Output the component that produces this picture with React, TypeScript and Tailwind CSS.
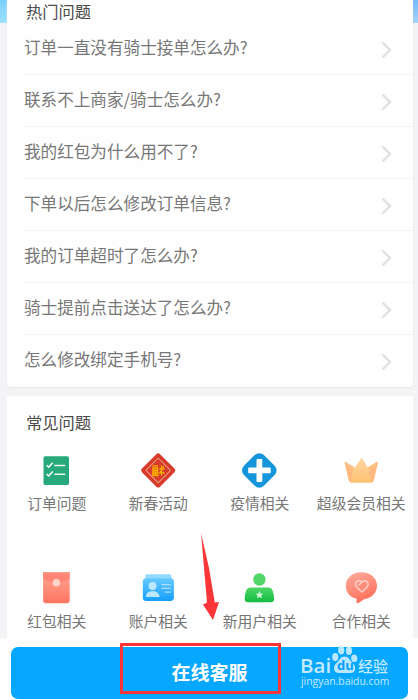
import type { ReactNode } from "react";

const questions = [
  "订单一直没有骑士接单怎么办?",
  "联系不上商家/骑士怎么办?",
  "我的红包为什么用不了?",
  "下单以后怎么修改订单信息?",
  "我的订单超时了怎么办?",
  "骑士提前点击送达了怎么办?",
  "怎么修改绑定手机号?",
];

function Chevron() {
  return (
    <svg className="mt-[3px] mr-[21px] h-[18px] w-3 shrink-0" viewBox="0 0 12 18" fill="none">
      <path d="M2.5 1.5 10 9l-7.5 7.5" stroke="#dfdfdf" strokeWidth="2.2" />
    </svg>
  );
}

const iconClass = "h-10 w-10 -ml-px";

function OrderIcon() {
  return (
    <svg className={iconClass} viewBox="0 0 40 40" fill="none">
      <rect x="7.5" y="6.3" width="25.5" height="28.6" rx="1.6" fill="#27a97b" />
      <path d="m10.7 15.2 2 2 4-4.5M10.7 24l2 2 4-4.5" stroke="#fff" strokeWidth="1.5" />
      <path d="M18.8 15.5h10M18.8 24.3h10" stroke="#e9f8f1" strokeWidth="1.4" strokeLinecap="round" />
    </svg>
  );
}

function FestivalIcon() {
  return (
    <svg className={iconClass} viewBox="0 0 40 40" fill="none">
      <rect x="7.4" y="7.6" width="25.6" height="25.6" rx="2.6" fill="#d83a2c" transform="rotate(45 20.2 20.4)" />
      <rect x="11.5" y="11.7" width="17.4" height="17.4" rx=".6" stroke="#eba082" strokeWidth="1" transform="rotate(45 20.2 20.4)" />
      <path d="M14.3 15.8h5.8M15 18h4.6v2.2H15zM14.8 22h5v3.6h-5zM17.3 22v3.5M14.8 23.8h5M21.4 19h5.2M23.5 15.5v10M25.8 15.8l-1 2M23.4 21l-2 2.5M24 22l2.4 1.4" stroke="#f7b000" strokeWidth="1.35" />
    </svg>
  );
}

function MedicalIcon() {
  return (
    <svg className={iconClass} viewBox="0 0 40 40">
      <rect x="6.2" y="6.3" width="28.2" height="28.2" rx="6.5" fill="#1596db" transform="rotate(45 20.3 20.4)" />
      <path d="M18.5 9h3.8q1 0 1 1v7.5h7.4q1 0 1 1v3.8q0 1-1 1h-7.4v7.6q0 1-1 1h-3.8q-1 0-1-1v-7.6h-7.3q-1 0-1-1v-3.8q0-1 1-1h7.3V10q0-1 1-1Z" fill="#fff" />
    </svg>
  );
}

function CrownIcon() {
  return (
    <svg className={iconClass} viewBox="0 0 40 40">
      <defs>
        <linearGradient id="crown" x1="0" y1="0" x2="0" y2="1">
          <stop stopColor="#ffd7a0" />
          <stop offset="1" stopColor="#ffc173" />
        </linearGradient>
      </defs>
      <path d="M3.8 13.2q-.5-2 1.3-1.1l8.5 5.1L11 32.8q-2.5 0-3.2-2.6Z" fill="#ffc18a" />
      <path d="M36.8 13.2q.5-2-1.3-1.1l-8.5 5.1 2.6 15.6q2.5 0 3.2-2.6Z" fill="#ffbd76" />
      <path d="m4 12.4 8.2 7.8L20 8.4q.7-.9 1.4 0L28.2 20l8.2-7.8-5 19q-.5 1.6-2.4 1.6H11.7q-2 0-2.6-1.6Z" fill="url(#crown)" />
      <path d="m4 12.4 7.9 8-2.3 11.8q-1.3-.5-1.8-2Z" fill="#ffb87d" />
      <path d="m36.5 12.4-9 9 3.7 10.2q1.2-.7 1.6-1.9Z" fill="#ffb87d" />
    </svg>
  );
}

function PacketIcon() {
  return (
    <svg className={iconClass} viewBox="0 0 40 40">
      <defs>
        <linearGradient id="packet" x1="0" y1="0" x2="0" y2="1">
          <stop stopColor="#ffa796" />
          <stop offset="1" stopColor="#ff7560" />
        </linearGradient>
      </defs>
      <path d="M7.1 4h26.6v28.3q0 3-3 3H10.1q-3 0-3-3Z" fill="url(#packet)" />
      <path d="M7.1 4h26.6v6.5q-13.3 9-26.6 0Z" fill="#ff8674" />
      <path d="M7.1 4h26.6v1.4H7.1Z" fill="#ff9d8c" />
      <circle cx="20.4" cy="14.8" r="3.8" fill="#ffd4ca" />
    </svg>
  );
}

function AccountIcon() {
  return (
    <svg className={iconClass} viewBox="0 0 40 40">
      <defs>
        <linearGradient id="account" x1="0" y1="0" x2="0" y2="1">
          <stop stopColor="#65c9ff" />
          <stop offset="1" stopColor="#159ffb" />
        </linearGradient>
      </defs>
      <rect x="7.4" y="6.2" width="26" height="10" rx="1.6" fill="#91d9ff" />
      <rect x="4.8" y="10.3" width="31.1" height="22.7" rx="3.4" fill="url(#account)" />
      <circle cx="14.5" cy="18.1" r="4" fill="#bbe7ff" />
      <path d="M7.8 29q.4-6.1 6.8-6.1T21.8 29Z" fill="#bbe7ff" />
      <path d="M23.4 16.6h9.5M23.4 20.4h9.5M26.8 24.1h6.1" stroke="#a7dfff" strokeWidth="1.3" />
    </svg>
  );
}

function NewUserIcon() {
  return (
    <svg className={iconClass} viewBox="0 0 40 40">
      <defs>
        <linearGradient id="user" x1="0" y1="0" x2="0" y2="1">
          <stop stopColor="#4ed765" />
          <stop offset="1" stopColor="#13bb43" />
        </linearGradient>
      </defs>
      <circle cx="20.4" cy="11.5" r="6.2" fill="#54d568" />
      <path d="M11.8 19.6h17.6q3 0 4.2 3 1.5 3.7 1.5 8.7-.2 3-3.4 3H9.1q-3.2 0-3.4-3 0-5 1.5-8.7 1.3-3 4.6-3Z" fill="url(#user)" />
      <path d="m20.4 23 1.1 2.5 2.7.3-2 1.8.6 2.7-2.4-1.4-2.4 1.4.6-2.7-2-1.8 2.7-.3Z" fill="#ccf5d2" />
    </svg>
  );
}

function PartnerIcon() {
  return (
    <svg className={iconClass} viewBox="0 0 40 40" fill="none">
      <defs>
        <linearGradient id="partner" x1="0" y1="0" x2=".4" y2="1">
          <stop stopColor="#ffad9e" />
          <stop offset="1" stopColor="#ff725c" />
        </linearGradient>
      </defs>
      <path d="M20.3 4.2C29 4.2 36 9.5 36 17.7c0 7-5.5 12.2-12.5 13.2l-6 4q-1.8 1-2-1v-3.3C9 29.4 4.8 24.5 4.8 17.7 4.8 9.5 11.7 4.2 20.3 4.2Z" fill="url(#partner)" />
      <path d="m20.8 24-4.8-4.6c-4.2-4.1 1.3-8.7 4.8-5.1 3.7-3.7 9.1 1 4.8 5.1L20.8 24Zm0-9.7-3.2 3" stroke="#ffd5cd" strokeWidth="1.4" />
    </svg>
  );
}

const topics: { label: string; icon: ReactNode }[] = [
  { label: "订单问题", icon: <OrderIcon /> },
  { label: "新春活动", icon: <FestivalIcon /> },
  { label: "疫情相关", icon: <MedicalIcon /> },
  { label: "超级会员相关", icon: <CrownIcon /> },
  { label: "红包相关", icon: <PacketIcon /> },
  { label: "账户相关", icon: <AccountIcon /> },
  { label: "新用户相关", icon: <NewUserIcon /> },
  { label: "合作相关", icon: <PartnerIcon /> },
];

function Watermark() {
  return (
    <div className="absolute top-[645px] left-[300px] w-[92px] text-[#c4eaff]">
      <div className="flex h-[31px] items-start">
        <span className="w-[32px] pt-[9px] font-['Open_Sans',sans-serif] text-[20.5px] leading-[22px] font-semibold">Bai</span>
        <span className="relative h-[31px] w-[25px] shrink-0">
          <svg className="h-[30px] w-[26px]" viewBox="0 0 27 31" fill="#b9e7ff">
            <ellipse cx="3.4" cy="12.5" rx="3.2" ry="4.2" />
            <ellipse cx="9.6" cy="5.5" rx="3.2" ry="4.4" />
            <ellipse cx="17.6" cy="6" rx="3.2" ry="4.4" />
            <ellipse cx="23.1" cy="13.7" rx="3.2" ry="4" />
            <path d="M13.2 11.8c5 0 5 4.4 8 6.8 5 4.2 3 10.5-1.5 10.5H6.9c-5 0-6.7-6.5-2.2-10.5 3.4-3 3.7-6.8 8.5-6.8Z" />
          </svg>
          <span className="absolute top-[13px] left-[5px] font-['Open_Sans',sans-serif] text-[13px] leading-[15px] font-bold text-[#079fff]">du</span>
        </span>
        <span className="ml-px pt-[10px] text-[15px] leading-[22px] font-medium whitespace-nowrap">经验</span>
      </div>
      <div className="-mt-px ml-px font-['Open_Sans',sans-serif] text-[10.4px] leading-[12px] whitespace-nowrap">jingyan.baidu.com</div>
    </div>
  );
}

export default function App() {
  return (
    <div className="relative flex h-[700px] w-[418px] flex-col overflow-hidden bg-[#f4f4f7] font-['Noto_Sans_CJK_SC',sans-serif]">
      <div className="flex h-[387px] shrink-0 justify-between">
        <div className="h-[23px] w-[7px] bg-linear-to-b from-[#78cefb] to-[#9de2ff]" />
        <section className="flex w-[406px] flex-col rounded-b-sm bg-[#fefefe] pl-[17px] shadow-[0_1px_2px_#e6e6e6]">
          <h2 className="h-[23px] pl-[2px] text-[16.3px] leading-[23px] text-[#4b4b4b]">热门问题</h2>
          {questions.map((question) => (
            <div key={question} className="flex h-[52px] items-center justify-between border-b border-[#f3f3f3] last:border-transparent">
              <span className="pb-[3px] text-[16.6px] leading-6 whitespace-nowrap text-[#777]">{question}</span>
              <Chevron />
            </div>
          ))}
        </section>
        <div className="h-[23px] w-[5px] bg-linear-to-b from-[#76b9f8] to-[#a5d4fa]" />
      </div>

      <section className="mt-[9px] ml-[7px] h-[242px] w-[406px] shrink-0 bg-[#fefefe]">
        <h2 className="ml-[19px] pt-[15px] text-[16.3px] leading-[22px] text-[#4b4b4b]">常见问题</h2>
        <div className="mt-[17px] -ml-px grid w-[406px] grid-cols-4">
          {topics.map((topic) => (
            <div key={topic.label} className="flex h-[118px] flex-col items-center">
              {topic.icon}
              <span className="mt-[3px] text-[14.8px] leading-5 whitespace-nowrap text-[#777]">{topic.label}</span>
            </div>
          ))}
        </div>
      </section>

      <footer className="h-[62px] shrink-0 bg-[#fefefe] pt-[9px]">
        <button className="ml-[11px] block h-[52px] w-[397px] rounded-[7px] bg-[#05a7ff] pb-[3px] text-[19px] leading-[49px] font-bold text-white">
          在线客服
        </button>
      </footer>

      <Watermark />
      <div className="absolute top-[643px] left-[120px] h-[51px] w-[161px] border-3 border-[#fc3638]" />
      <svg className="absolute top-[533px] left-[200px] h-[88px] w-[21px]" viewBox="0 0 21 88">
        <path d="M1 0 9 35 14.8 69.5 19 69 13 87 3 71.5 7 69.5Z" fill="#fc3638" />
      </svg>
    </div>
  );
}
